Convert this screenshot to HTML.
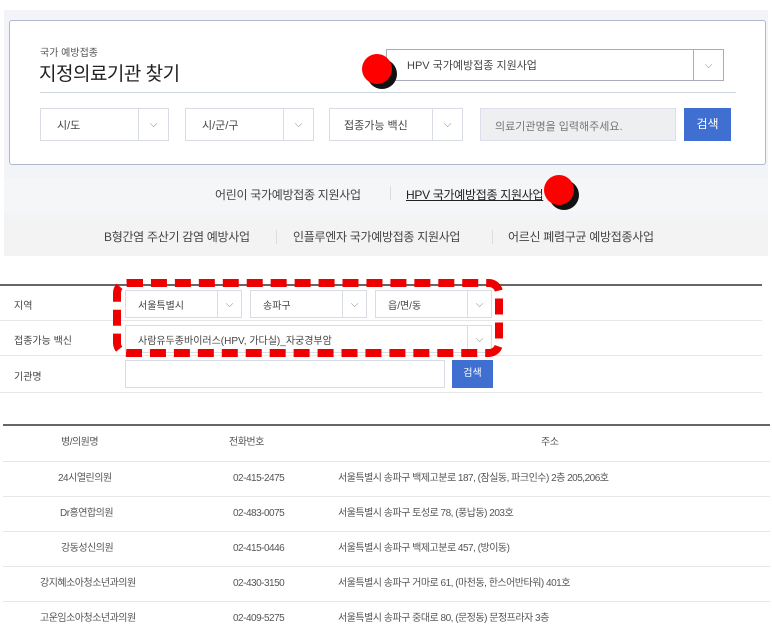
<!DOCTYPE html><html><head><meta charset="utf-8"><style>
*{margin:0;padding:0;box-sizing:border-box}
body{width:772px;height:635px;background:#fff;font-family:"Liberation Sans","Noto Sans CJK KR",sans-serif;color:#444;position:relative;overflow:hidden;font-size:11px}
.a{position:absolute}
.sel{position:absolute;background:#fff;border:1px solid #d9dde3;font-size:11px;color:#444;display:flex;align-items:center;padding-left:12px}
.sel .ar{position:absolute;right:0;top:0;bottom:0;width:30px;border-left:1px solid #d9dde3;display:flex;align-items:center;justify-content:center;color:#888;font-size:10px}
.dot{position:absolute;width:30px;height:30px;border-radius:50%;background:#f00;box-shadow:5px 5px 0 #111}
.row{position:absolute;left:3px;width:767px;border-bottom:1px solid #e6e6e6;height:35px;font-size:10px;color:#555;line-height:34px}
.row span{position:absolute;top:0;letter-spacing:-0.5px}
</style></head><body>
<div class="a" style="left:4px;top:10px;width:764px;height:245px;background:#f2f4f7"></div>
<div class="a" style="left:9px;top:20px;width:757px;height:145px;background:#fff;border:1px solid #aebacc;border-radius:3px"></div>
<div class="a" style="left:40px;top:44px;font-size:10px;color:#555">국가 예방접종</div>
<div class="a" style="left:39px;top:59px;font-size:19px;color:#222;letter-spacing:-0.5px">지정의료기관 찾기</div>
<div class="sel" style="left:386px;top:49px;width:338px;height:32px;padding-left:20px;border-color:#aab">HPV 국가예방접종 지원사업<div class="ar" style="width:30px;border-color:#aab">⌵</div></div>
<div class="a" style="left:40px;top:92px;width:696px;height:1px;background:#cfd5de"></div>
<div class="sel" style="left:40px;top:108px;width:129px;height:33px;padding-left:16px">시/도<div class="ar">⌵</div></div>
<div class="sel" style="left:185px;top:108px;width:129px;height:33px;padding-left:16px">시/군/구<div class="ar">⌵</div></div>
<div class="sel" style="left:329px;top:108px;width:134px;height:33px;padding-left:14px">접종가능 백신<div class="ar">⌵</div></div>
<div class="a" style="left:480px;top:108px;width:196px;height:33px;background:#eeeff1;border:1px solid #dde;font-size:11px;color:#777;padding:9px 0 0 14px">의료기관명을 입력해주세요.</div>
<div class="a" style="left:684px;top:108px;width:47px;height:33px;background:#3f6fd1;color:#fff;font-size:12px;text-align:center;line-height:33px">검색</div>
<div class="dot" style="left:362px;top:54px"></div>
<div class="a" style="left:4px;top:178px;width:764px;height:34px;background:#f5f6f8"></div>
<div class="a" style="left:4px;top:218px;width:764px;height:38px;background:#f3f3f4"></div>
<div class="a" style="left:215px;top:186px;font-size:12px;color:#444;letter-spacing:-0.3px">어린이 국가예방접종 지원사업</div>
<div class="a" style="left:390px;top:186px;width:1px;height:14px;background:#ddd"></div>
<div class="a" style="left:406px;top:186px;font-size:12px;color:#222;text-decoration:underline;letter-spacing:-0.3px">HPV 국가예방접종 지원사업</div>
<div class="dot" style="left:544px;top:175px"></div>
<div class="a" style="left:104px;top:228px;font-size:12px;letter-spacing:-0.3px">B형간염 주산기 감염 예방사업</div>
<div class="a" style="left:276px;top:230px;width:1px;height:14px;background:#ddd"></div>
<div class="a" style="left:293px;top:228px;font-size:12px;letter-spacing:-0.3px">인플루엔자 국가예방접종 지원사업</div>
<div class="a" style="left:492px;top:230px;width:1px;height:14px;background:#ddd"></div>
<div class="a" style="left:508px;top:228px;font-size:12px;letter-spacing:-0.3px">어르신 폐렴구균 예방접종사업</div>
<div class="a" style="left:0;top:284px;width:762px;height:2px;background:#666"></div>
<div class="a" style="left:0;top:320px;width:762px;height:1px;background:#e6e6e6"></div>
<div class="a" style="left:0;top:355px;width:762px;height:1px;background:#e6e6e6"></div>
<div class="a" style="left:0;top:392px;width:762px;height:1px;background:#e6e6e6"></div>
<div class="a" style="left:14px;top:297px;font-size:10px">지역</div>
<div class="a" style="left:14px;top:332px;font-size:10px">접종가능 백신</div>
<div class="a" style="left:14px;top:368px;font-size:10px">기관명</div>
<div class="sel" style="left:125px;top:290px;width:117px;height:28px;font-size:10px">서울특별시<div class="ar" style="width:24px">⌵</div></div>
<div class="sel" style="left:250px;top:290px;width:117px;height:28px;font-size:10px">송파구<div class="ar" style="width:24px">⌵</div></div>
<div class="sel" style="left:375px;top:290px;width:117px;height:28px;font-size:10px">읍/면/동<div class="ar" style="width:24px">⌵</div></div>
<div class="sel" style="left:125px;top:325px;width:367px;height:28px;font-size:10px">사람유두종바이러스(HPV, 가다실)_자궁경부암<div class="ar" style="width:24px">⌵</div></div>
<div class="a" style="left:125px;top:360px;width:320px;height:28px;border:1px solid #d9dde3"></div>
<div class="a" style="left:452px;top:360px;width:41px;height:28px;background:#3f6fd1;color:#fff;font-size:10px;text-align:center;line-height:28px">검색</div>
<div class="a" style="left:113px;top:279px;width:390px;height:78px;border:8px dashed #e00;border-radius:14px"></div>
<div class="a" style="left:3px;top:424px;width:767px;height:2px;background:#666"></div>
<div class="row" style="top:426px;height:36px"><span style="left:58px">병/의원명</span><span style="left:226px">전화번호</span><span style="left:538px">주소</span></div>
<div class="row" style="top:462px"><span style="left:55px">24시열린의원</span><span style="left:230px">02-415-2475</span><span style="left:335px">서울특별시 송파구 백제고분로 187, (잠실동, 파크인수) 2층 205,206호</span></div>
<div class="row" style="top:497px"><span style="left:57px">Dr홍연합의원</span><span style="left:230px">02-483-0075</span><span style="left:335px">서울특별시 송파구 토성로 78, (풍납동) 203호</span></div>
<div class="row" style="top:532px"><span style="left:58px">강동성신의원</span><span style="left:230px">02-415-0446</span><span style="left:335px">서울특별시 송파구 백제고분로 457, (방이동)</span></div>
<div class="row" style="top:567px"><span style="left:37px">강지혜소아청소년과의원</span><span style="left:230px">02-430-3150</span><span style="left:335px">서울특별시 송파구 거마로 61, (마천동, 한스어반타워) 401호</span></div>
<div class="row" style="top:602px;border:0"><span style="left:37px">고운임소아청소년과의원</span><span style="left:230px">02-409-5275</span><span style="left:335px">서울특별시 송파구 중대로 80, (문정동) 문정프라자 3층</span></div>
</body></html>
